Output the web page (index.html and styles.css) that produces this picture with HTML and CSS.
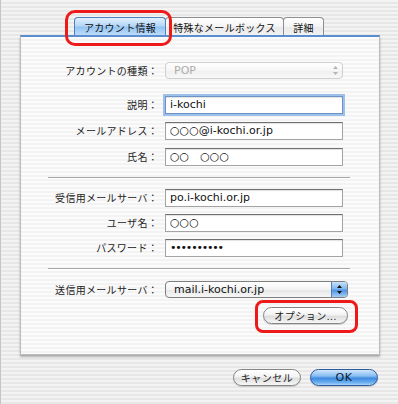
FILE: index.html
```html
<!DOCTYPE html>
<html lang="ja">
<head>
<meta charset="utf-8">
<link rel="stylesheet" href="styles.css">
</head>
<body>
<div class="window">
  <div class="tabs">
    <div class="tab tab-1 active">アカウント情報</div>
    <div class="tab tab-2">特殊なメールボックス</div>
    <div class="tab tab-3">詳細</div>
  </div>
  <div class="panel">
    <div class="row row-type">
      <span class="label">アカウントの種類：</span>
      <div class="popup disabled">
        <span class="popup-text">POP</span>
        <span class="popup-arrows">
          <svg width="7" height="11" viewBox="0 0 7 11"><path d="M3.5 1 L6 4 L1 4 Z M3.5 10 L6 7 L1 7 Z" fill="#b4b4b4"/></svg>
        </span>
      </div>
    </div>
    <div class="row row-desc">
      <span class="label">説明：</span>
      <div class="field focus">i-kochi</div>
    </div>
    <div class="row row-gap8">
      <span class="label">メールアドレス：</span>
      <div class="field">○○○@i-kochi.or.jp</div>
    </div>
    <div class="row row-gap8">
      <span class="label">氏名：</span>
      <div class="field">○○　○○○</div>
    </div>
    <div class="sep"></div>
    <div class="row row-in">
      <span class="label">受信用メールサーバ：</span>
      <div class="field">po.i-kochi.or.jp</div>
    </div>
    <div class="row row-gap7">
      <span class="label">ユーザ名：</span>
      <div class="field">○○○</div>
    </div>
    <div class="row row-gap7">
      <span class="label">パスワード：</span>
      <div class="field password">••••••••••</div>
    </div>
    <div class="sep"></div>
    <div class="row row-out">
      <span class="label">送信用メールサーバ：</span>
      <div class="popup active-popup">
        <span class="popup-text">mail.i-kochi.or.jp</span>
        <span class="popup-arrows blue">
          <svg width="7" height="11" viewBox="0 0 7 11"><path d="M3.5 1 L6 4 L1 4 Z M3.5 10 L6 7 L1 7 Z" fill="#111"/></svg>
        </span>
      </div>
    </div>
    <div class="opt-row">
      <div class="btn btn-opt">オプション...</div>
    </div>
  </div>
  <div class="buttons">
    <div class="btn btn-cancel">キャンセル</div>
    <div class="btn btn-ok">OK</div>
  </div>
  <div class="hl hl-tab"></div>
  <div class="hl hl-opt"></div>
</div>
</body>
</html>
```

FILE: styles.css
```css
html, body {
  margin: 0;
  padding: 0;
}
body {
  width: 398px;
  height: 404px;
  overflow: hidden;
  font-family: "Noto Sans CJK JP", sans-serif;
  color: #1a1a1a;
  background: repeating-linear-gradient(to bottom, #f3f3f3 0, #f3f3f3 2px, #e7e7e7 2px, #e7e7e7 4px);
}
.window {
  position: relative;
  height: 404px;
  box-sizing: border-box;
  border-left: 1px solid #c4c4c4;
}
.tabs {
  display: flex;
  padding: 17px 0 0 73px;
  height: 18px;
}
.tab {
  height: 18px;
  box-sizing: border-box;
  border: 1px solid #8f8f8f;
  border-bottom: none;
  border-radius: 4px 4px 0 0;
  background: linear-gradient(#ffffff, #f4f4f4 50%, #e9e9e9 51%, #f2f2f2);
  font-size: 10px;
  letter-spacing: 0.3px;
  display: flex;
  align-items: center;
  justify-content: center;
  color: #111;
  padding-top: 1px;
}
.tab + .tab {
  margin-left: -1px;
}
.tab-1 { width: 92px; }
.tab-2 { width: 119px; }
.tab-3 { width: 41px; }
.tab.active {
  background: linear-gradient(#e2f0fd, #b4d7f8 45%, #95c4f2 55%, #bcdcfa);
  border-color: #4f80c0;
  position: relative;
  z-index: 1;
}
.panel {
  margin-left: 19px;
  width: 360px;
  height: 320px;
  box-sizing: border-box;
  border: 1px solid #bdbdbd;
  border-top: 2px solid #5b8dcf;
  background: repeating-linear-gradient(to bottom, #fbfbfb 0, #fbfbfb 2px, #f3f3f3 2px, #f3f3f3 4px);
  box-shadow: 0 2px 2px rgba(0, 0, 0, 0.28);
}
.row {
  display: flex;
  align-items: center;
}
.label {
  width: 137px;
  margin-right: 7px;
  text-align: right;
  font-size: 10px;
  letter-spacing: 0.3px;
  line-height: 14px;
  color: #222;
  white-space: nowrap;
}
.row-type { margin-top: 25px; }
.row-desc { margin-top: 17px; }
.row-gap8 { margin-top: 8px; }
.row-in { margin-top: 10px; }
.row-gap7 { margin-top: 7px; }
.row-out { margin-top: 11px; }
.field {
  width: 178px;
  height: 18px;
  box-sizing: border-box;
  background: #fff;
  border: 1px solid #a4a4a4;
  border-top-color: #707070;
  box-shadow: inset 0 1px 1px rgba(0, 0, 0, 0.12);
  font: 11px "DejaVu Sans", "Noto Sans CJK JP", sans-serif;
  line-height: 16px;
  padding-left: 4px;
  color: #111;
  white-space: nowrap;
  overflow: hidden;
}
.field.focus {
  border-color: #6d93c6;
  box-shadow: 0 0 0 2px #9cc0ea, inset 0 1px 1px rgba(0, 0, 0, 0.12);
}
.field.password {
  font-size: 11px;
  letter-spacing: -1.2px;
}
.sep {
  margin: 11px 0 0 27px;
  width: 302px;
  height: 0;
  border-top: 1px solid #a6a6a6;
  border-bottom: 1px solid #ffffff;
}
.popup {
  height: 17px;
  box-sizing: border-box;
  display: flex;
  align-items: center;
  justify-content: space-between;
  border-radius: 4px;
  font: 11px "DejaVu Sans", "Noto Sans CJK JP", sans-serif;
  overflow: hidden;
}
.popup-text {
  padding-left: 8px;
}
.popup.disabled {
  width: 178px;
  border: 1px solid #cfcfcf;
  background: linear-gradient(#ffffff, #f6f6f6 50%, #efefef 51%, #f8f8f8);
  color: #acacac;
}
.popup.disabled .popup-arrows {
  width: 14px;
  display: flex;
  justify-content: center;
}
.popup.active-popup {
  width: 183px;
  border: 1px solid #7e7e7e;
  background: linear-gradient(#ffffff, #f3f3f3 50%, #e6e6e6 51%, #f7f7f7);
  color: #111;
}
.popup-arrows.blue {
  width: 15px;
  height: 100%;
  display: flex;
  align-items: center;
  justify-content: center;
  border-left: 1px solid #4f7fbf;
  background: linear-gradient(#c8e2fb, #7fb5ee 45%, #4f93e2 55%, #a6d0f7);
}
.opt-row {
  display: flex;
  justify-content: flex-end;
  padding-right: 31px;
  margin-top: 9px;
}
.btn {
  height: 17px;
  box-sizing: border-box;
  border-radius: 9px;
  border: 1px solid #858585;
  background: linear-gradient(#ffffff, #f3f3f3 45%, #dedede 55%, #f6f6f6);
  display: flex;
  align-items: center;
  justify-content: center;
  font-size: 10px;
  letter-spacing: 0.5px;
  color: #222;
  box-shadow: 0 1px 1px rgba(0, 0, 0, 0.15);
}
.btn-opt {
  width: 85px;
}
.buttons {
  display: flex;
  justify-content: flex-end;
  gap: 9px;
  padding-right: 20px;
  margin-top: 14px;
}
.btn-cancel {
  width: 68px;
}
.btn-ok {
  width: 68px;
  border-color: #2f5a9a;
  background: linear-gradient(#cfe6fc, #86bdf2 40%, #3f8ae0 55%, #6fb2f2 85%, #a9d6fb);
  font: 11px "DejaVu Sans", sans-serif;
  color: #0e1c2e;
}
.hl {
  position: absolute;
  box-sizing: border-box;
  border: 3px solid #ee1a1a;
}
.hl-tab {
  left: 64px;
  top: 10px;
  width: 107px;
  height: 36px;
  border-radius: 10px;
}
.hl-opt {
  left: 254px;
  top: 300px;
  width: 103px;
  height: 33px;
  border-radius: 8px;
}
```
